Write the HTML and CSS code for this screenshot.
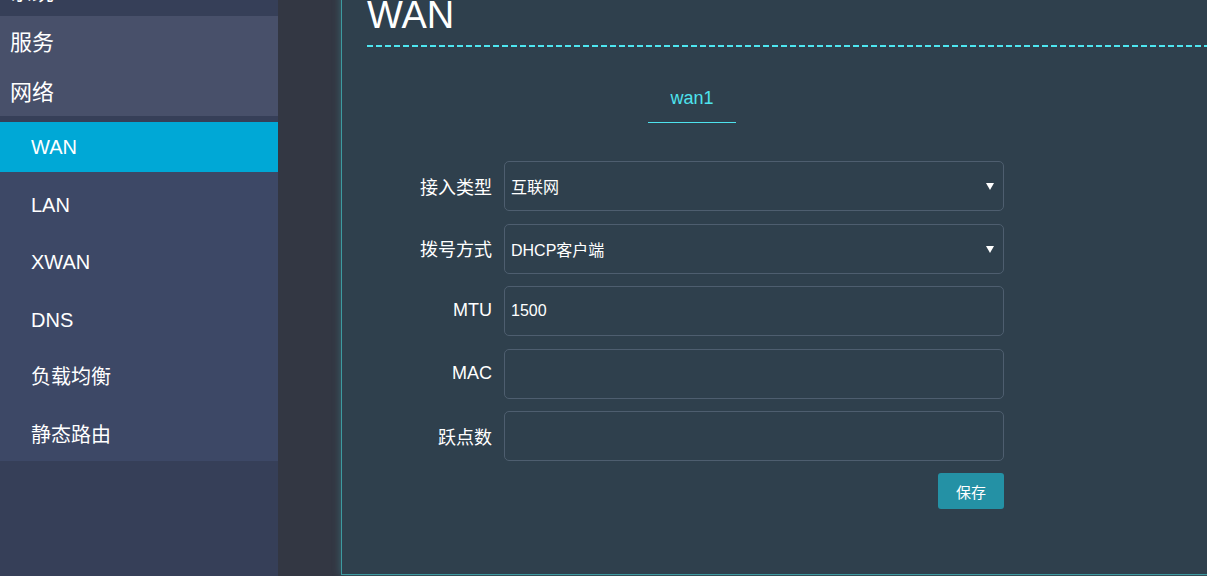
FILE: index.html
```html
<!DOCTYPE html>
<html lang="zh-CN">
<head>
<meta charset="utf-8">
<title>WAN</title>
<link rel="stylesheet" href="styles.css">
</head>
<body>
<div class="app">
  <nav class="sidebar">
    <div class="menu-item">系统</div>
    <div class="menu-group">
      <div class="menu-item">服务</div>
      <div class="menu-item">网络</div>
    </div>
    <ul class="submenu">
      <li class="sub-item active">WAN</li>
      <li class="sub-item">LAN</li>
      <li class="sub-item">XWAN</li>
      <li class="sub-item">DNS</li>
      <li class="sub-item">负载均衡</li>
      <li class="sub-item">静态路由</li>
    </ul>
  </nav>
  <main class="main">
    <section class="panel">
      <h1 class="title">WAN</h1>
      <div class="dash"></div>
      <div class="tabs">
        <div class="tab active">wan1</div>
      </div>
      <form class="form">
        <div class="row">
          <label class="label">接入类型</label>
          <div class="field select"><span class="value">互联网</span><span class="arrow"></span></div>
        </div>
        <div class="row">
          <label class="label">拨号方式</label>
          <div class="field select"><span class="value">DHCP客户端</span><span class="arrow"></span></div>
        </div>
        <div class="row">
          <label class="label">MTU</label>
          <div class="field"><span class="value">1500</span></div>
        </div>
        <div class="row">
          <label class="label">MAC</label>
          <div class="field"></div>
        </div>
        <div class="row">
          <label class="label">跃点数</label>
          <div class="field"></div>
        </div>
        <div class="actions">
          <button type="button" class="btn">保存</button>
        </div>
      </form>
    </section>
  </main>
</div>
</body>
</html>
```
FILE: styles.css
```css
* { box-sizing: border-box; }
html, body {
  margin: 0;
  padding: 0;
  height: 576px;
  overflow: hidden;
  background: #333743;
  font-family: "Liberation Sans", "Noto Sans CJK SC", sans-serif;
  color: #ffffff;
}
.app {
  display: flex;
  height: 576px;
}
.sidebar {
  width: 278px;
  flex: none;
  background: #363f58;
  margin-top: -34px;
  height: 610px;
}
.menu-item {
  height: 50px;
  line-height: 50px;
  font-size: 22px;
  padding: 2px 0 0 10px;
}
.menu-group {
  background: #48506a;
}
.submenu {
  list-style: none;
  margin: 6px 0 0;
  padding: 0 0 1px;
  background: #3d4866;
}
.sub-item {
  height: 50px;
  line-height: 50px;
  font-size: 20px;
  padding-left: 31px;
  margin-top: 7.5px;
}
.sub-item:first-child { margin-top: 0; }
.sub-item.active {
  background: #00a8d6;
}
.main {
  flex: 1;
  padding-left: 63px;
  min-width: 0;
}
.panel {
  margin-top: -20px;
  height: 595px;
  width: 900px;
  background: #2f404d;
  border: 1px solid #3d9aa0;
  box-shadow: 0 0 8px rgba(70, 190, 195, 0.35);
  padding: 12px 0 0 25px;
}
.title {
  margin: 0;
  font-size: 38px;
  line-height: 44px;
  font-weight: normal;
}
.dash {
  margin-top: 8px;
  height: 2px;
  background: repeating-linear-gradient(90deg, #4ee6f0 0 6px, transparent 6px 9px);
}
.tabs {
  display: flex;
  margin-top: 28px;
  padding-left: 281px;
}
.tab {
  font-size: 18px;
  line-height: 24px;
  padding: 11px 22px 12px;
  width: 88px;
  text-align: center;
  color: #4ee3ee;
  border-bottom: 1px solid #4ee3ee;
}
.form {
  margin-top: 38px;
  width: 637px;
}
.row {
  display: flex;
  align-items: center;
  margin-bottom: 12.5px;
}
.label {
  width: 137px;
  flex: none;
  text-align: right;
  padding-right: 12px;
  padding-bottom: 1px;
  font-size: 18px;
}
.field {
  position: relative;
  width: 500px;
  flex: none;
  height: 50px;
  border: 1px solid #4e5e6f;
  border-radius: 5px;
  display: flex;
  align-items: center;
  padding-left: 6px;
  font-size: 16px;
}
.arrow {
  position: absolute;
  right: 9px;
  top: 21px;
  width: 0;
  height: 0;
  border-left: 4px solid transparent;
  border-right: 4px solid transparent;
  border-top: 7px solid #ffffff;
}
.actions {
  display: flex;
  justify-content: flex-end;
  margin-top: -0.5px;
}
.btn {
  width: 66px;
  height: 36px;
  border: none;
  border-radius: 3px;
  background: #2491a5;
  color: #ffffff;
  font-family: "Liberation Sans", "Noto Sans CJK SC", sans-serif;
  font-size: 15px;
  padding: 0;
}
```
